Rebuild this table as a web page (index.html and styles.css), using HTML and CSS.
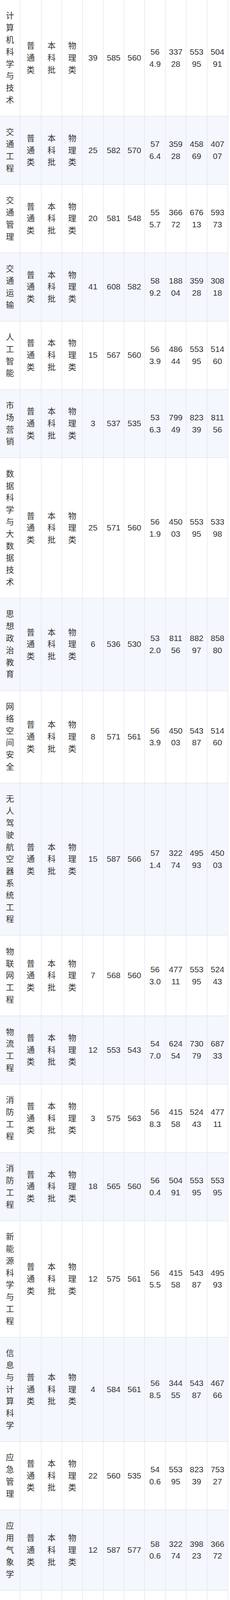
FILE: index.html
```html
<!DOCTYPE html>
<html lang="zh-CN">
<head>
<meta charset="utf-8">
<title>录取分数</title>
<link rel="stylesheet" href="styles.css">
</head>
<body>
<div class="page">
<table class="score-table stripe-even">
<colgroup>
<col class="w52"><col class="w54"><col class="w53"><col class="w53"><col class="w53"><col class="w53"><col class="w53"><col class="w53"><col class="w53"><col class="w54"><col class="w53">
</colgroup>
<tbody>
<tr><td>计算机科学与技术</td><td>普通类</td><td>本科批</td><td>物理类</td><td>39</td><td>585</td><td>560</td><td>564.9</td><td>33728</td><td>55395</td><td>50491</td></tr>
<tr><td>交通工程</td><td>普通类</td><td>本科批</td><td>物理类</td><td>25</td><td>582</td><td>570</td><td>576.4</td><td>35928</td><td>45869</td><td>40707</td></tr>
<tr><td>交通管理</td><td>普通类</td><td>本科批</td><td>物理类</td><td>20</td><td>581</td><td>548</td><td>555.7</td><td>36672</td><td>67613</td><td>59373</td></tr>
<tr><td>交通运输</td><td>普通类</td><td>本科批</td><td>物理类</td><td>41</td><td>608</td><td>582</td><td>589.2</td><td>18804</td><td>35928</td><td>30818</td></tr>
<tr><td>人工智能</td><td>普通类</td><td>本科批</td><td>物理类</td><td>15</td><td>567</td><td>560</td><td>563.9</td><td>48644</td><td>55395</td><td>51460</td></tr>
<tr><td>市场营销</td><td>普通类</td><td>本科批</td><td>物理类</td><td>3</td><td>537</td><td>535</td><td>536.3</td><td>79949</td><td>82339</td><td>81156</td></tr>
<tr><td>数据科学与大数据技术</td><td>普通类</td><td>本科批</td><td>物理类</td><td>25</td><td>571</td><td>560</td><td>561.9</td><td>45003</td><td>55395</td><td>53398</td></tr>
<tr><td>思想政治教育</td><td>普通类</td><td>本科批</td><td>物理类</td><td>6</td><td>536</td><td>530</td><td>532.0</td><td>81156</td><td>88297</td><td>85880</td></tr>
<tr><td>网络空间安全</td><td>普通类</td><td>本科批</td><td>物理类</td><td>8</td><td>571</td><td>561</td><td>563.9</td><td>45003</td><td>54387</td><td>51460</td></tr>
<tr><td>无人驾驶航空器系统工程</td><td>普通类</td><td>本科批</td><td>物理类</td><td>15</td><td>587</td><td>566</td><td>571.4</td><td>32274</td><td>49593</td><td>45003</td></tr>
<tr><td>物联网工程</td><td>普通类</td><td>本科批</td><td>物理类</td><td>7</td><td>568</td><td>560</td><td>563.0</td><td>47711</td><td>55395</td><td>52443</td></tr>
<tr><td>物流工程</td><td>普通类</td><td>本科批</td><td>物理类</td><td>12</td><td>553</td><td>543</td><td>547.0</td><td>62454</td><td>73079</td><td>68733</td></tr>
<tr><td>消防工程</td><td>普通类</td><td>本科批</td><td>物理类</td><td>3</td><td>575</td><td>563</td><td>568.3</td><td>41558</td><td>52443</td><td>47711</td></tr>
<tr><td>消防工程</td><td>普通类</td><td>本科批</td><td>物理类</td><td>18</td><td>565</td><td>560</td><td>560.4</td><td>50491</td><td>55395</td><td>55395</td></tr>
<tr><td>新能源科学与工程</td><td>普通类</td><td>本科批</td><td>物理类</td><td>12</td><td>575</td><td>561</td><td>565.5</td><td>41558</td><td>54387</td><td>49593</td></tr>
<tr><td>信息与计算科学</td><td>普通类</td><td>本科批</td><td>物理类</td><td>4</td><td>584</td><td>561</td><td>568.5</td><td>34455</td><td>54387</td><td>46766</td></tr>
<tr><td>应急管理</td><td>普通类</td><td>本科批</td><td>物理类</td><td>22</td><td>560</td><td>535</td><td>540.6</td><td>55395</td><td>82339</td><td>75327</td></tr>
<tr><td>应用气象学</td><td>普通类</td><td>本科批</td><td>物理类</td><td>12</td><td>587</td><td>577</td><td>580.6</td><td>32274</td><td>39823</td><td>36672</td></tr>
<tr><td>应用心理学</td><td>普通类</td><td>本科批</td><td>物理类</td><td>4</td><td>559</td><td>542</td><td>547.8</td><td>56423</td><td>74215</td><td>67613</td></tr>
<tr><td>应用心理学</td><td>普通类</td><td>本科批</td><td>物理类</td><td>11</td><td>555</td><td>535</td><td>539.8</td><td>60374</td><td>82339</td><td>76490</td></tr>
<tr><td>英语</td><td>普通类</td><td>本科批</td><td>物理类</td><td>13</td><td>556</td><td>537</td><td>544.8</td><td>59373</td><td>79949</td><td>70843</td></tr>
<tr><td>智慧交通</td><td>普通类</td><td>本科批</td><td>物理类</td><td>24</td><td>584</td><td>560</td><td>566.2</td><td>34455</td><td>55395</td><td>49593</td></tr>
<tr><td>飞机机电设备维修</td><td>普通类</td><td>专科批</td><td>物理类</td><td>12</td><td>532</td><td>502</td><td>506.7</td><td>85880</td><td>124544</td><td>117870</td></tr>
</tbody>
</table>
<table class="score-table stripe-odd">
<colgroup>
<col class="w52"><col class="w52"><col class="w53"><col class="w59"><col class="w52"><col class="w53"><col class="w53"><col class="w52"><col class="w53"><col class="w52"><col class="w53">
</colgroup>
<tbody>
<tr><td>体能训练</td><td>体育类</td><td>本科提前批</td><td>体育（不分科目类）</td><td>33</td><td>94</td><td>89</td><td>90.5</td><td>/</td><td>/</td><td>/</td></tr>
<tr><td>航空服务艺术与管理</td><td>艺术类</td><td>本科提前批</td><td>艺术（不分科目类）</td><td>10</td><td>506</td><td>469</td><td>480.4</td><td>/</td><td>/</td><td>/</td></tr>
</tbody>
</table>
<table class="score-table stripe-odd">
<colgroup>
<col class="w52"><col class="w54"><col class="w53"><col class="w53"><col class="w53"><col class="w53"><col class="w53"><col class="w53"><col class="w53"><col class="w54"><col class="w53">
</colgroup>
<tbody>
<tr><td>飞行技术(国航送培)</td><td>普通类</td><td>本科提前批</td><td>物理类</td><td>50</td><td>658</td><td>577</td><td>602</td><td>2118</td><td>39823</td><td>23428</td></tr>
<tr><td>飞行技术(东航送培)</td><td>普通类</td><td>本科提前批</td><td>物理类</td><td>10</td><td>598</td><td>575</td><td>584</td><td>24744</td><td>41558</td><td>34587</td></tr>
<tr><td>飞行技术(本培)</td><td>普通类</td><td>本科提前批</td><td>物理类</td><td>173</td><td>637</td><td>549</td><td>572</td><td>6688</td><td>66644</td><td>45498</td></tr>
</tbody>
</table>
</div>
</body>
</html>
```

FILE: styles.css
```css
html,
body {
  margin: 0;
  padding: 0;
  background: #ffffff;
}

body {
  font-family: "Liberation Sans", "Noto Sans CJK SC", sans-serif;
  font-size: 21px;
  line-height: 30.8px;
  color: #333333;
}

.page {
  width: 589px;
  height: 6421px;
  overflow: hidden;
}

.score-table {
  width: 584px;
  border-collapse: separate;
  border-spacing: 0;
  table-layout: fixed;
}

.score-table td {
  padding: 25.35px 7px;
  border-right: 1px solid #dcdfe6;
  border-bottom: 1px solid #dcdfe6;
  text-align: center;
  vertical-align: middle;
  word-break: break-all;
}

.stripe-even tr:nth-child(even) td,
.stripe-odd tr:nth-child(odd) td {
  background: #f4f7fd;
}

.w52 { width: 52px; }
.w53 { width: 53px; }
.w54 { width: 54px; }
.w59 { width: 59px; }
```
